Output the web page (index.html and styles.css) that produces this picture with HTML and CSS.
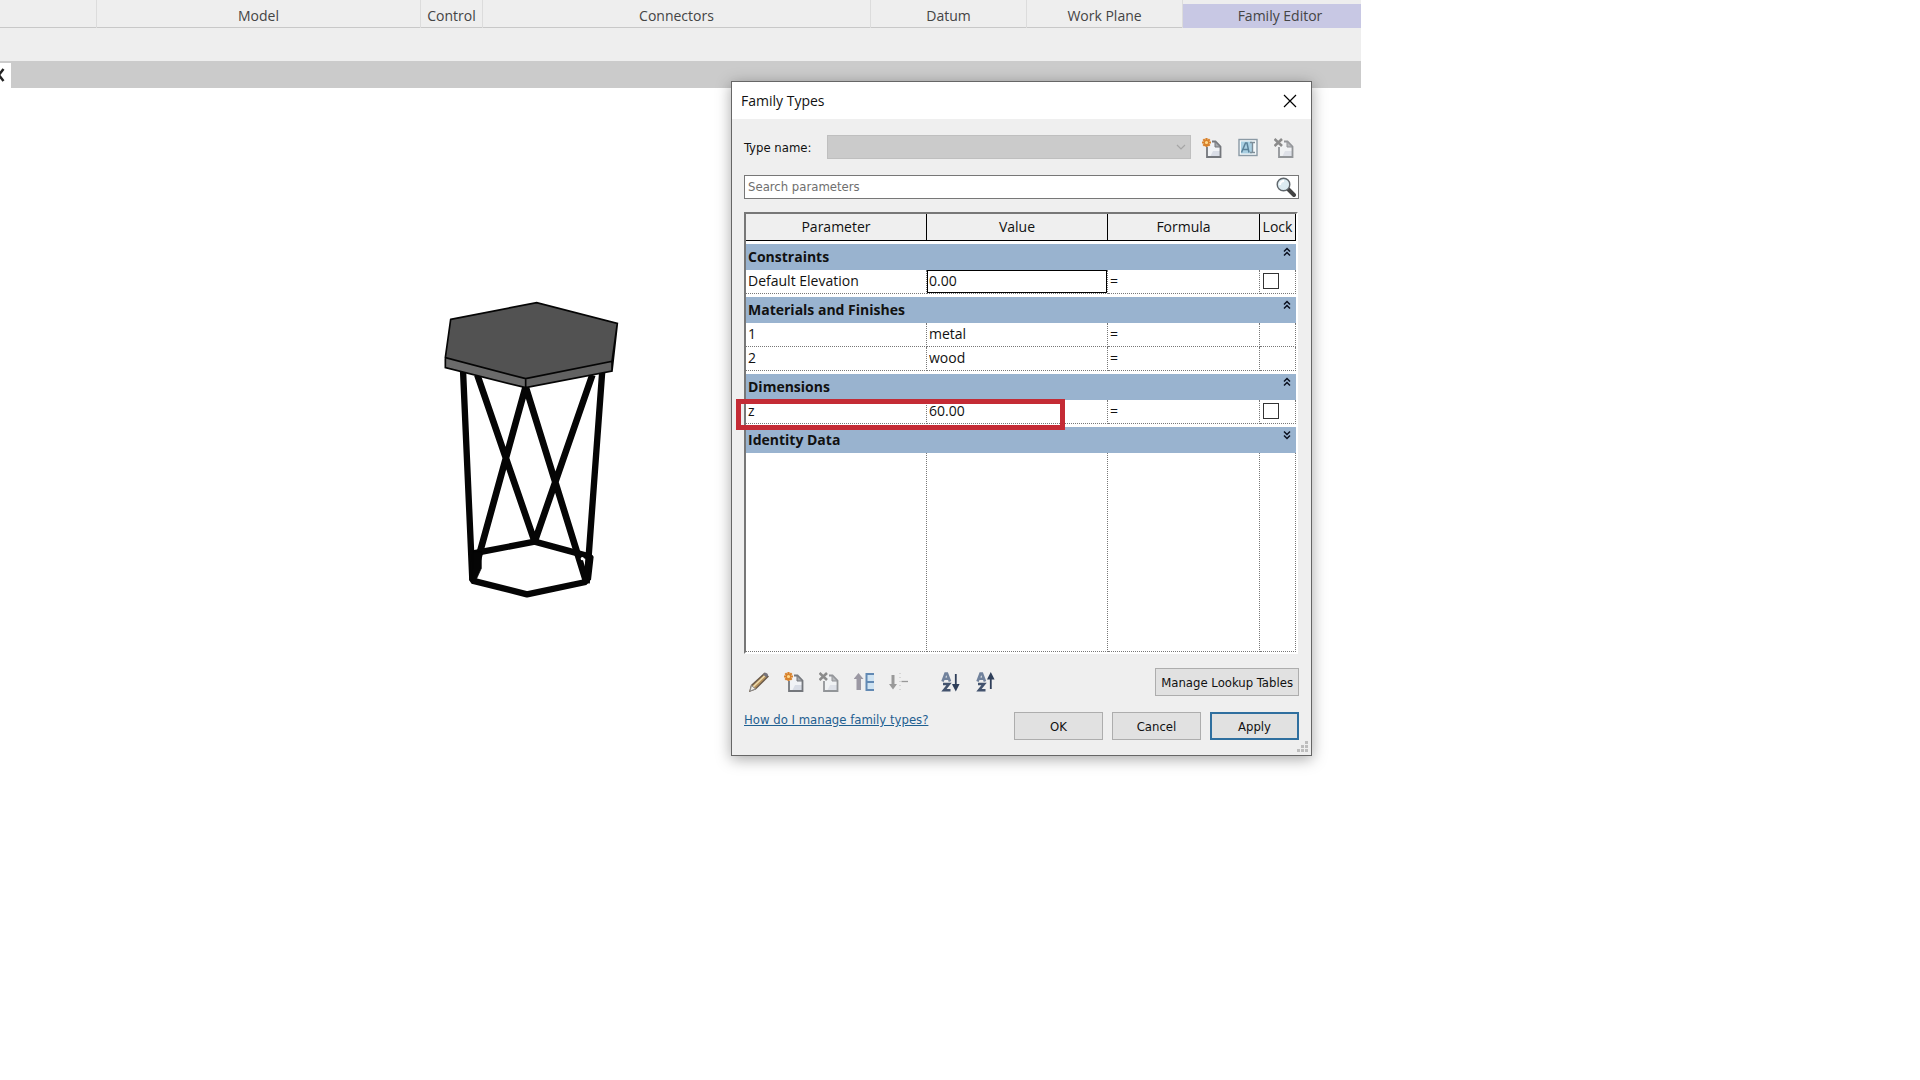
FILE: index.html
```html
<!DOCTYPE html>
<html lang="en">
  <head>
    <title>Family Types</title>
    <meta charset="UTF-8" />
    <meta name="viewport" content="width=device-width, initial-scale=1.0" />
    <link rel="stylesheet" href="styles.css">
  </head>
  <body>
    <!-- shared icons -->
    <svg class="symbols" aria-hidden="true">
      <symbol id="icon-page" viewBox="0 0 20 20">
        <path d="M5 8v11.200h13.500V8.500L14 3.500H9z" fill="#f1f3f6" />
        <path d="M11 13h7v6h-10z" fill="#d9dde6" />
        <path d="M5 9v10h13.500V8.500L13.500 3.500H10" fill="none" stroke="#74777c" stroke-width="1.800" />
        <path d="M13 3.500v5.500h5.500z" fill="#a6a9ad" stroke="#74777c" stroke-width="1" />
      </symbol>
      <symbol id="icon-new" viewBox="0 0 20 20">
        <use href="#icon-page" />
        <path d="M4.500 0v9M0 4.500h9M1.300 1.300l6.400 6.400M7.700 1.300L1.300 7.700" stroke="#d9822b" stroke-width="2.200" />
        <circle cx="4.500" cy="4.500" r="2.200" fill="#ffd98c" stroke="#d9822b" stroke-width="1.200" />
      </symbol>
      <symbol id="icon-delete" viewBox="0 0 20 20">
        <g opacity="0.75"><use href="#icon-page" /></g>
        <path d="M0.500 1l7.500 7M8 1L0.500 8" stroke="#8b8b8b" stroke-width="2.600" />
      </symbol>
      <symbol id="icon-up" viewBox="0 0 10 10">
        <path d="M2 4.500l3-3 3 3M2 8.500l3-3 3 3" fill="none" stroke="#0b1020" stroke-width="1.500" />
      </symbol>
      <symbol id="icon-down" viewBox="0 0 10 10">
        <path d="M2 1.500l3 3 3-3M2 5.500l3 3 3-3" fill="none" stroke="#0b1020" stroke-width="1.500" />
      </symbol>
      <symbol id="icon-az" viewBox="0 0 12 20">
        <path d="M1.500 9.500L4.500 1.500h1.500L9 9.500M3 6.800h5" fill="none" stroke="#71829c" stroke-width="2.600" />
        <path d="M2 12h6L3 18.200h6.500" fill="none" stroke="#43536e" stroke-width="2.600" />
      </symbol>
    </svg>

    <header class="ribbon">
      <nav class="panels">
        <div class="panel"></div>
        <div class="panel">Model</div>
        <div class="panel">Control</div>
        <div class="panel">Connectors</div>
        <div class="panel">Datum</div>
        <div class="panel">Work Plane</div>
        <div class="panel active">Family Editor</div>
      </nav>
      <div class="options-bar"></div>
      <div class="view-tabs">
        <button class="tab-close" aria-label="Close view">
          <svg width="11" height="24" viewBox="0 0 11 24"><path d="M-6 5L3.500 17M3.500 5L-6 17" stroke="#222" stroke-width="2.500" /></svg>
        </button>
      </div>
    </header>

    <main class="canvas">
      <svg class="stool" width="200" height="320" viewBox="0 0 600 960" role="img" aria-label="Hexagonal stool">
        <g fill="none" stroke="#050505" stroke-linejoin="bevel">
          <path d="M99 240L127 870M517 240L470 880" stroke-width="19" />
          <path d="M142 255L314 755L487 255M287 290L135 840M287 290L467 870" stroke-width="20" />
          <path d="M130 790L314 755L480 800L467 876L291 913L127 872L135 790" stroke-width="19" />
          <path d="M130 785h24v50l-16 35h-12z" fill="#050505" stroke-width="2" />
          <path d="M465 795L486 800 478 870" stroke-width="10" />
        </g>
        <circle cx="457" cy="806" r="5" fill="#fff" />
        <path d="M46 203L287 266V293L46 233z" fill="#6b6b6b" />
        <path d="M287 266L546 214V243L287 293z" fill="#626262" />
        <path d="M62 88L320 38L562 100L546 214L287 266L46 203z" fill="#525252" />
        <path d="M62 88L320 38L562 100L546 214L287 266L46 203zM46 203V233L287 293L546 243V214M287 266V293M562 100L546 243" fill="none" stroke="#050505" stroke-width="5" />
      </svg>
    </main>

    <section class="dialog" role="dialog" aria-labelledby="dialog-title">
      <div class="title-bar">
        <h1 id="dialog-title">Family Types</h1>
        <button class="close" aria-label="Close">
          <svg width="14" height="14" viewBox="0 0 14 14"><path d="M1 1l12 12M13 1L1 13" stroke="#000" stroke-width="1.200" /></svg>
        </button>
      </div>

      <div class="dialog-body">
        <div class="type-row">
          <label for="type-name">Type name:</label>
          <div class="select-wrap">
            <select id="type-name" disabled></select>
            <svg class="arrow" width="10" height="6" viewBox="0 0 10 6"><path d="M1 1l4 4 4-4" fill="none" stroke="#a6a6a6" stroke-width="1.200" /></svg>
          </div>
          <div class="type-tools">
            <button aria-label="New type"><svg width="20" height="20"><use href="#icon-new" /></svg></button>
            <button aria-label="Rename type">
              <svg width="20" height="20" viewBox="0 0 20 20">
                <rect x="1" y="1.500" width="18" height="16" fill="#f3f8fa" stroke="#8b9aa5" stroke-width="1.400" />
                <rect x="3" y="3.500" width="11" height="12" fill="#a9cfe2" />
                <path d="M3.500 14.500L7.500 5h1.500l2 9.500M5 11.500h5" fill="none" stroke="#5b8299" stroke-width="1.500" />
                <path d="M12 4.500h5M14.500 4.500v10M12 14.500h5" stroke="#7d8e99" stroke-width="1.400" />
              </svg>
            </button>
            <button aria-label="Delete type"><svg width="20" height="20"><use href="#icon-delete" /></svg></button>
          </div>
        </div>

        <div class="search">
          <input type="text" placeholder="Search parameters" aria-label="Search parameters" />
          <button aria-label="Search">
            <svg width="20" height="20" viewBox="0 0 20 20">
              <path d="M12 12l6 6" stroke="#444" stroke-width="4" stroke-linecap="round" />
              <circle cx="7.500" cy="7.500" r="6.300" fill="#dcebf1" stroke="#5f666b" stroke-width="1.400" />
              <path d="M4 8a4 4 0 0 1 4-4" fill="none" stroke="#fff" stroke-width="2" />
            </svg>
          </button>
        </div>

        <div class="grid-wrap">
          <table class="params">
            <colgroup>
              <col class="col-name" /><col class="col-value" /><col /><col class="col-lock" />
            </colgroup>
            <thead>
              <tr><th>Parameter</th><th>Value</th><th>Formula</th><th>Lock</th></tr>
            </thead>
            <tbody>
              <tr class="group">
                <th colspan="4"><div>Constraints<button aria-label="Collapse"><svg width="10" height="10"><use href="#icon-up" /></svg></button></div></th>
              </tr>
              <tr>
                <td>Default Elevation</td>
                <td><input class="value focused" type="text" value="0.00" aria-label="Default Elevation" /></td>
                <td>=</td>
                <td><input type="checkbox" aria-label="Lock Default Elevation" /></td>
              </tr>
              <tr class="group">
                <th colspan="4"><div>Materials and Finishes<button aria-label="Collapse"><svg width="10" height="10"><use href="#icon-up" /></svg></button></div></th>
              </tr>
              <tr>
                <td>1</td>
                <td><input class="value" type="text" value="metal" aria-label="1" /></td>
                <td>=</td>
                <td></td>
              </tr>
              <tr>
                <td>2</td>
                <td><input class="value" type="text" value="wood" aria-label="2" /></td>
                <td>=</td>
                <td></td>
              </tr>
              <tr class="group">
                <th colspan="4"><div>Dimensions<button aria-label="Collapse"><svg width="10" height="10"><use href="#icon-up" /></svg></button></div></th>
              </tr>
              <tr>
                <td>z</td>
                <td><input class="value" type="text" value="60.00" aria-label="z" /></td>
                <td>=</td>
                <td><input type="checkbox" aria-label="Lock z" /></td>
              </tr>
              <tr class="group">
                <th colspan="4"><div>Identity Data<button aria-label="Expand"><svg width="10" height="10"><use href="#icon-down" /></svg></button></div></th>
              </tr>
              <tr class="filler"><td></td><td></td><td></td><td></td></tr>
            </tbody>
          </table>
          <div class="highlight"></div>
        </div>

        <div class="tool-row">
          <div class="tools">
            <button aria-label="Edit parameter">
              <svg width="20" height="20" viewBox="0 0 20 20">
                <path d="M1 19l1.500-5.500L15.500 1.500l3.500 3L6.500 17z" fill="#b8935c" stroke="#6a5a4a" stroke-width="1.400" />
                <path d="M4 15L16 3.500" stroke="#efdcae" stroke-width="1.500" />
                <path d="M14 2.500l2-1.800q2.500-.5 3.200 2.500L17.500 5.500z" fill="#77747c" />
                <path d="M1 19l1.500-5.500L6.500 17z" fill="#f2efe8" stroke="#8d8d8d" />
              </svg>
            </button>
            <button aria-label="New parameter"><svg width="20" height="20"><use href="#icon-new" /></svg></button>
            <button aria-label="Delete parameter"><svg width="20" height="20"><use href="#icon-delete" /></svg></button>
            <button aria-label="Move up">
              <svg width="20" height="20" viewBox="0 0 20 20">
                <path d="M4.500 1l5 6H7V18H2.500V7H-.5z" fill="#9b98a3" />
                <path d="M12 1h8v18h-8z" fill="#cfe3f2" />
                <path d="M20 2h-7.500v16H20M12.500 10H20" fill="none" stroke="#6289b3" stroke-width="2" />
              </svg>
            </button>
            <button aria-label="Move down">
              <svg width="20" height="20" viewBox="0 0 20 20">
                <path d="M2.500 3h3v9H8l-4 5.500L0 12h2.500z" fill="#999" />
                <path d="M12.500 9.500H19" stroke="#999" stroke-width="1.300" />
                <path d="M11 1v18" stroke="#bbb" stroke-dasharray="1 3" />
              </svg>
            </button>
            <button class="sort" aria-label="Sort ascending">
              <svg width="20" height="20" viewBox="0 0 20 20">
                <use href="#icon-az" width="12" height="20" />
                <path d="M14.800 2v15M12.500 13l2.300 4.500 2.300-4.500z" fill="#2f3f5a" stroke="#2f3f5a" stroke-width="1.800" />
              </svg>
            </button>
            <button aria-label="Sort descending">
              <svg width="20" height="20" viewBox="0 0 20 20">
                <use href="#icon-az" width="12" height="20" />
                <path d="M14.800 17V2M12.500 6.500l2.300-4.500 2.300 4.500z" fill="#2f3f5a" stroke="#2f3f5a" stroke-width="1.800" />
              </svg>
            </button>
          </div>
          <button class="btn">Manage Lookup Tables</button>
        </div>

        <div class="footer">
          <a href="#">How do I manage family types?</a>
          <div class="actions">
            <button class="btn">OK</button>
            <button class="btn">Cancel</button>
            <button class="btn primary">Apply</button>
          </div>
        </div>
      </div>

      <svg class="grip" width="12" height="12" viewBox="0 0 12 12">
        <path d="M8 0h3v3H8zM8 4h3v3H8zM8 8h3v3H8zM4 4h3v3H4zM4 8h3v3H4zM0 8h3v3H0z" fill="#bdbdbd" />
      </svg>
    </section>
  </body>
</html>
```
FILE: styles.css
```css
* {
  margin: 0;
  padding: 0;
  box-sizing: border-box;
}

body {
  position: relative;
  min-height: 100vh;
  background: white;
  color: #111;
  font-family: "Open Sans", "Noto Sans", sans-serif;
  font-size: 14px;
}

button,
input,
select {
  font: inherit;
  color: inherit;
  border: none;
  background: none;
}

svg {
  display: block;
}

.symbols {
  position: absolute;
  width: 0;
  height: 0;
}

/* Ribbon */
.ribbon {
  margin-right: 559px;
  background: #eeeeee;
}

.panels {
  display: grid;
  grid-template-columns: 97px 324px 62px 388px 156px 156px 1fr;
  height: 28px;
  padding-bottom: 1px;
  border-bottom: 1px solid #c8c8c8;
}

.panel {
  padding-top: 4px;
  border-right: 1px solid #dcdcdc;
  color: #444;
  line-height: 24px;
  text-align: center;
  white-space: nowrap;
}

.panel.active {
  margin-top: 4px;
  padding-top: 0;
  padding-left: 16px;
  border: none;
  background: #c8c8e4;
  line-height: 24px;
}

.options-bar {
  height: 33px;
}

.view-tabs {
  height: 27px;
  padding-top: 2px;
  background: #cbcbcb;
}

.tab-close {
  display: block;
  width: 11px;
  height: 25px;
  background: white;
  overflow: hidden;
}

/* Drawing area */
.canvas {
  padding: 202px 0 0 430px;
}

/* Dialog */
.dialog {
  position: absolute;
  top: 81px;
  left: 731px;
  width: 581px;
  border: 1px solid #666;
  background: #efefef;
  box-shadow: 0 3px 14px rgba(0, 0, 0, 0.35);
}

.title-bar {
  display: flex;
  justify-content: space-between;
  align-items: center;
  height: 37px;
  padding: 0 13px 0 9px;
  background: white;
}

.title-bar h1 {
  font-size: 14px;
  font-weight: normal;
}

.close {
  padding: 1px;
}

.dialog-body {
  padding: 16px 12px 15px 12px;
  font-family: "DejaVu Sans Condensed", "DejaVu Sans", sans-serif;
  font-size: 13px;
}

.type-row {
  display: flex;
  align-items: center;
  height: 24px;
}

.type-row label {
  width: 83px;
}

.select-wrap {
  position: relative;
  flex: 1;
}

.select-wrap select {
  display: block;
  width: 100%;
  height: 24px;
  border: 1px solid #bfbfbf;
  background: #cbcbcb;
  opacity: 1;
  appearance: none;
}

.arrow {
  position: absolute;
  top: 9px;
  right: 5px;
}

.type-tools {
  display: flex;
  gap: 16px;
  padding: 2px 5px 0 11px;
}

.search {
  display: flex;
  align-items: center;
  height: 24px;
  margin-top: 16px;
  padding: 0 2px 0 3px;
  border: 1px solid #777;
  background: white;
}

.search input {
  flex: 1;
  height: 20px;
  padding-bottom: 2px;
  outline: none;
}

.search input::placeholder {
  color: #6f6f6f;
}

/* Parameter table */
.grid-wrap {
  position: relative;
  margin: 13px 1px 0 0;
  border: 2px solid white;
  border-top-color: #777;
  border-left-color: #777;
  background: white;
  font-family: "Open Sans", "Noto Sans", sans-serif;
  font-size: 14px;
}

.params {
  width: 100%;
  table-layout: fixed;
  border-spacing: 0;
}

.col-name,
.col-value {
  width: 181px;
}

.col-lock {
  width: 36px;
}

.params thead th {
  height: 27px;
  border-right: 1px solid black;
  border-bottom: 1px solid black;
  background: #efefef;
  font-weight: normal;
  line-height: 26px;
}

.params td {
  height: 24px;
  padding-left: 2px;
  border-right: 1px dotted #777;
  border-bottom: 1px dotted #777;
  line-height: 22px;
  vertical-align: top;
}

.group th {
  padding-top: 3px;
}

.group div {
  display: flex;
  justify-content: space-between;
  height: 26px;
  padding: 0 4px 0 2px;
  background: #99b3cf;
  line-height: 26px;
  text-align: left;
}

.group button {
  align-self: flex-start;
  padding-top: 3px;
}

.params td:nth-child(2) {
  padding: 0;
}

.value {
  display: block;
  width: 100%;
  height: 23px;
  padding: 0 2px 2px;
  outline: none;
}

.value.focused {
  padding: 0 1px 2px;
  border: 1px solid black;
}

.params input[type="checkbox"] {
  display: block;
  width: 16px;
  height: 16px;
  margin: 3px 0 0 1px;
  border: 1px solid #333;
  background: white;
  appearance: none;
}

.params .filler td {
  height: 199px;
}

.highlight {
  position: absolute;
  top: 185px;
  left: -10px;
  width: 329px;
  height: 31px;
  border: 5px solid #c42b35;
}

/* Buttons below the table */
.tool-row {
  display: flex;
  justify-content: space-between;
  height: 28px;
  margin-top: 14px;
}

.tools {
  display: flex;
  align-items: center;
  gap: 15px;
  padding-left: 5px;
}

.sort {
  margin-left: 17px;
}

.btn {
  min-width: 89px;
  height: 28px;
  padding: 0 5px;
  border: 1px solid #adadad;
  background: #e1e1e1;
}

.btn.primary {
  border: 2px solid #2f6f9f;
}

.footer {
  display: flex;
  justify-content: space-between;
  margin-top: 16px;
}

.footer a {
  color: #1f6091;
}

.actions {
  display: flex;
  gap: 9px;
}

.grip {
  position: absolute;
  right: 2px;
  bottom: 2px;
}
```
